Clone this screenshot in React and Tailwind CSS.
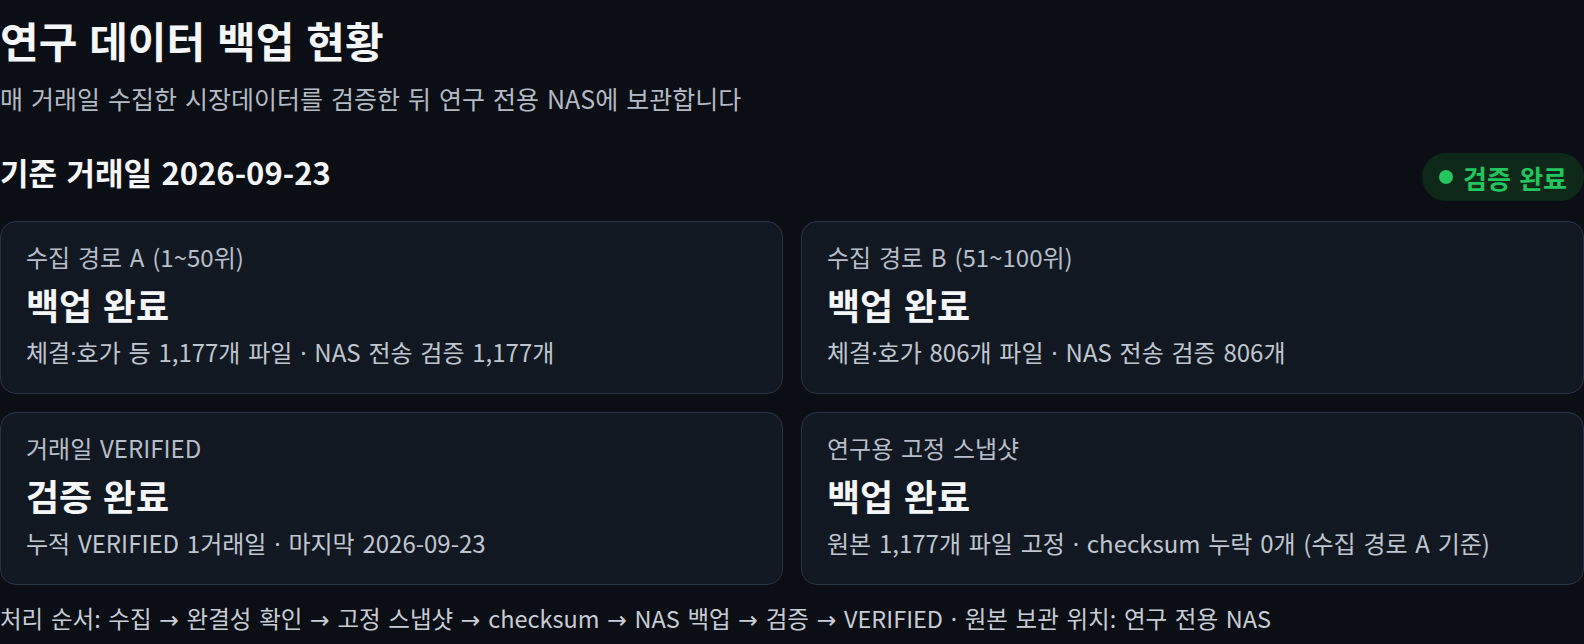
const latin = { fontFamily: '"Noto Sans", "DejaVu Sans", sans-serif' };

function T({ text }) {
  const parts = text.split(/([·→])/);
  return parts.map((p, i) =>
    p === "·" || p === "→" ? (
      <span key={i} style={latin} className="font-normal">
        {p}
      </span>
    ) : (
      <span key={i}>{p}</span>
    )
  );
}

export default function App() {
  const cards = [
    { label: "수집 경로 A (1~50위)", value: "백업 완료", detail: "체결·호가 등 1,177개 파일 · NAS 전송 검증 1,177개" },
    { label: "수집 경로 B (51~100위)", value: "백업 완료", detail: "체결·호가 806개 파일 · NAS 전송 검증 806개" },
    { label: "거래일 VERIFIED", value: "검증 완료", detail: "누적 VERIFIED 1거래일 · 마지막 2026-09-23" },
    { label: "연구용 고정 스냅샷", value: "백업 완료", detail: "원본 1,177개 파일 고정 · checksum 누락 0개 (수집 경로 A 기준)" },
  ];
  return (
    <div
      className="min-h-screen w-full bg-[#0b0e14] text-[#f3f4f6] [word-spacing:0.15em]"
      style={{ fontFamily: '"Noto Sans CJK KR", "Noto Sans", sans-serif' }}
    >
      <div className="pt-[15px]">
        <h1 className="text-[42px] leading-[50px] font-bold text-[#f5f6f8]">연구 데이터 백업 현황</h1>
        <p className="mt-[17px] text-[25px] leading-[32px] text-[#b4bac4]">
          매 거래일 수집한 시장데이터를 검증한 뒤 연구 전용 NAS에 보관합니다
        </p>
        <div className="mt-[39px] flex items-center justify-between">
          <h2 className="-mt-[10px] text-[31px] leading-[38px] font-bold text-[#f5f6f8]">기준 거래일 2026-09-23</h2>
          <div className="flex h-[48px] items-center gap-[10px] rounded-full bg-[#0d2818] pl-[17px] pr-[17px] text-[26px] font-bold text-[#22c55e]">
            <span className="h-[14px] w-[14px] rounded-full bg-[#22c55e]" />
            <span>검증 완료</span>
          </div>
        </div>
        <div className="mt-[20px] grid grid-cols-2 gap-[18px]">
          {cards.map((c) => (
            <div
              key={c.label}
              className="rounded-[16px] border border-[#2a3346] bg-[#121821] px-[25px] pt-[20px] pb-[25px]"
            >
              <div className="text-[24px] leading-[30px] text-[#b8bec9]">{c.label}</div>
              <div className="mt-[10px] text-[36px] leading-[44px] font-bold text-[#f5f6f8]">{c.value}</div>
              <div className="mt-[11px] text-[24px] leading-[30px] text-[#c0c6cf]">
                <T text={c.detail} />
              </div>
            </div>
          ))}
        </div>
        <p className="mt-[18px] text-[23.5px] leading-[30px] text-[#c8ccd4]">
          <T text="처리 순서: 수집 → 완결성 확인 → 고정 스냅샷 → checksum → NAS 백업 → 검증 → VERIFIED · 원본 보관 위치: 연구 전용 NAS" />
        </p>
      </div>
    </div>
  );
}
